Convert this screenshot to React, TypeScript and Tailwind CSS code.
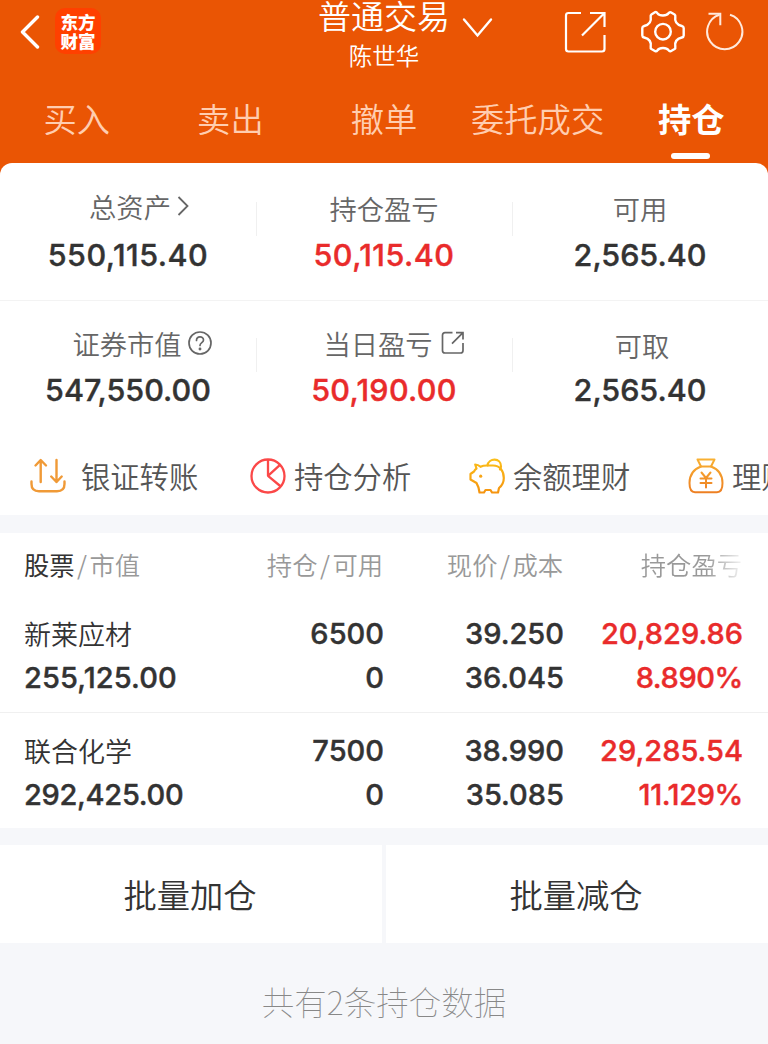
import type { ReactNode } from "react";

const tabs = ["买入", "卖出", "撤单", "委托成交", "持仓"];

const holdings = [
  {
    name: "新莱应材",
    value: "255,125.00",
    held: "6500",
    available: "0",
    price: "39.250",
    cost: "36.045",
    profit: "20,829.86",
    rate: "8.890%",
  },
  {
    name: "联合化学",
    value: "292,425.00",
    held: "7500",
    available: "0",
    price: "38.990",
    cost: "35.085",
    profit: "29,285.54",
    rate: "11.129%",
  },
];

function BackIcon() {
  return (
    <svg className="h-9 w-6" viewBox="0 0 24 36" fill="none" stroke="#fff" strokeWidth="3.4" strokeLinecap="round" strokeLinejoin="round">
      <path d="M20.500 4 5.500 19 20.500 34" />
    </svg>
  );
}

function ShareIcon() {
  return (
    <svg className="h-11 w-11" viewBox="0 0 44 44" fill="none" stroke="#fff" strokeWidth="2.2">
      <path d="M18 3H5.500Q3 3 3 5.500V39Q3 41.500 5.500 41.500H39Q41.500 41.500 41.500 39V25" />
      <path d="M27 3H41.500V17M41.500 3 19 25.500" />
    </svg>
  );
}

function GearIcon() {
  return (
    <svg className="h-11 w-11" viewBox="0 0 44 44" fill="none" stroke="#fff" strokeWidth="2.400" strokeLinejoin="round">
      <path d="M14.300 2.100Q15.500 1.800 16.500 3.300C18.500 6.200 25.500 6.200 27.500 3.300Q28.500 1.800 29.700 2.300L33.600 4.500Q34.600 5.200 34.300 6.800C33.500 11.500 36 14.800 40.800 16Q42.700 16.500 42.700 18V25.500Q42.700 27 40.800 27.500C36 28.700 33.500 32 34.300 36.700Q34.600 38.300 33.600 39L29.700 41.200Q28.500 41.700 27.500 40.200C25.500 37.300 18.500 37.300 16.500 40.200Q15.500 41.700 14.300 41.200L10.400 39Q9.400 38.300 9.700 36.700C10.500 32 8 28.700 3.200 27.500Q1.300 27 1.300 25.500V18Q1.300 16.500 3.200 16C8 14.800 10.500 11.500 9.700 6.800Q9.400 5.200 10.400 4.500Z" />
      <circle cx="22" cy="21.700" r="7.800" />
    </svg>
  );
}

function RefreshIcon() {
  return (
    <svg className="h-10 w-10" viewBox="0 0 40 40" fill="none" stroke="#ffe9dc" strokeWidth="2">
      <path d="M25 2.800A17.600 17.600 0 1 1 14.500 2.800" />
      <path d="M3.500 1.700H15.300V13.200" />
    </svg>
  );
}

function TransferIcon() {
  return (
    <svg className="h-9 w-9" viewBox="0 0 36 36" fill="none" stroke="#f09a37" strokeWidth="2.400" strokeLinecap="round" strokeLinejoin="round">
      <path d="M10.700 24V2.500M5.500 7.500 10.700 2 16 7.500" />
      <path d="M26.500 2V24M21.200 18.500 26.500 24 31.700 18.500" />
      <path d="M1.500 23.500V26Q1.500 33.200 9 33.200H27Q34.500 33.200 34.500 26V23.500" />
    </svg>
  );
}

function PieIcon() {
  return (
    <svg className="h-9 w-9" viewBox="0 0 36 36" fill="none" stroke="#fb4848" strokeWidth="2.300" strokeLinejoin="round">
      <circle cx="18" cy="18" r="16.500" />
      <path d="M18 1.500V17.800L30 6.800M18 17.800 30.800 28.500" />
    </svg>
  );
}

function PiggyIcon() {
  return (
    <svg className="h-9 w-9" viewBox="0 0 36 36" fill="none" strokeWidth="2.200" strokeLinejoin="round" strokeLinecap="round">
      <defs>
        <linearGradient id="pig" x1="0" y1="0" x2="0" y2="36" gradientUnits="userSpaceOnUse">
          <stop stopColor="#fbc01a" />
          <stop offset="1" stopColor="#f5930f" />
        </linearGradient>
      </defs>
      <g stroke="url(#pig)">
        <path d="M6.200 6.500Q9 6.500 11.500 8.800Q14 7.500 18 7.500H24C31 7.500 34.800 13 34.800 20C34.800 25.500 32.500 28 30 30L29 34.500H23L21.500 32H16.500L15 34.500H10.500L9.500 29.500L7.500 25L1.500 21.500V16L5 13.500Q6 11.500 7.500 10.500Z" />
        <path d="M18.500 7.500C19.500-.5 32.300-.5 32 8.500Q31.800 10.500 31 11.500" />
      </g>
      <circle cx="11.700" cy="18.200" r="1.600" fill="#f8a516" />
    </svg>
  );
}

function MoneyBagIcon() {
  return (
    <svg className="h-9 w-9" viewBox="0 0 36 36" fill="none" strokeWidth="2" strokeLinejoin="round" strokeLinecap="round">
      <defs>
        <linearGradient id="bag" x1="0" y1="0" x2="0" y2="36" gradientUnits="userSpaceOnUse">
          <stop stopColor="#f9b233" />
          <stop offset="1" stopColor="#ed7d22" />
        </linearGradient>
      </defs>
      <g stroke="url(#bag)">
        <path d="M9.500 1.500H26.500L23 8.500H13Z" />
        <path d="M13 8.500C5 11.500 1.500 18 1.500 25Q1.500 34.200 7 34.200H29Q34.500 34.200 34.500 25C34.500 18 31 11.500 23 8.500" />
        <path d="M13.500 14.500 18 20 22.500 14.500M18 20V29.500M12.500 20.500H23.500M12.500 25H23.500" />
      </g>
    </svg>
  );
}

function HelpIcon() {
  return (
    <svg className="h-6 w-6" viewBox="0 0 24 24" fill="none" stroke="#666" strokeWidth="1.700" strokeLinecap="round">
      <circle cx="12" cy="12" r="11" />
      <path d="M8.500 9.500C8.500 4.700 15.500 4.700 15.500 9C15.500 11.800 12 11.600 12 14.500" />
      <circle cx="12" cy="18" r=".6" fill="#666" />
    </svg>
  );
}

function OpenIcon() {
  return (
    <svg className="h-6 w-6" viewBox="0 0 24 24" fill="none" stroke="#666" strokeWidth="1.700">
      <path d="M11.500 1.700H4Q1.500 1.700 1.500 4.200V19.500Q1.500 22 4 22H19.500Q22 22 22 19.500V12" />
      <path d="M15 1.700H22V8.500M22 1.700 11 12.700" />
    </svg>
  );
}

type StatProps = {
  label: string;
  value: string;
  icon?: ReactNode;
  red?: boolean;
  divider?: boolean;
  labelClass?: string;
  valueClass?: string;
};

function Stat({ label, value, icon, red, divider, labelClass = "", valueClass = "" }: StatProps) {
  return (
    <div className="relative flex w-64 flex-col items-center">
      <div className={`flex h-9 items-center text-[27.300px] font-[350] leading-9 text-[#666] ${labelClass}`}>
        {label}
        {icon}
      </div>
      <div
        className={`font-[Inter] text-[30.500px] font-medium leading-9 [-webkit-text-stroke:0.4px] ${valueClass} ${
          red ? "text-[#e92b2b]" : "text-[#333]"
        }`}
      >
        {value}
      </div>
      {divider && <span className="absolute -right-px top-3 h-[34px] w-px bg-[#f0f0f0]" />}
    </div>
  );
}

function Action({ icon, label, className }: { icon: ReactNode; label: string; className: string }) {
  return (
    <div className={`flex shrink-0 items-center ${className}`}>
      {icon}
      <span className="-mt-0.5 whitespace-nowrap text-[29.300px] font-[350] leading-9 text-[#555]">{label}</span>
    </div>
  );
}

function Slash() {
  return <span className="mx-[2.500px]">/</span>;
}

export default function App() {
  return (
    <div className="flex h-[1044px] w-[768px] flex-col overflow-hidden bg-[#f6f7fa] font-['Noto_Sans_CJK_SC',sans-serif]">
      <header className="flex h-[163px] shrink-0 flex-col bg-[#ea5504] text-white">
        <div className="flex h-[84px] items-start">
          <div className="flex w-[256px] items-center pl-[17px] pt-2">
            <BackIcon />
            <div className="ml-[14px] flex h-[46px] w-[46px] flex-col items-center justify-center rounded-[10px] bg-[#ff4000] text-[17.500px] font-black leading-[19px]">
              <span>东方</span>
              <span>财富</span>
            </div>
          </div>
          <div className="flex w-64 flex-col items-center">
            <div className="relative h-9 text-[33px] font-[350] leading-[30px]">
              普通交易
              <svg className="absolute -right-[43px] top-[17px] h-[21px] w-[31px]" viewBox="0 0 31 21" fill="none" stroke="#fff" strokeWidth="2.400" strokeLinecap="round">
                <path d="M2 2.500 15.500 18.500 29 2.500" />
              </svg>
            </div>
            <div className="text-[23.500px] font-[350] leading-[38px]">陈世华</div>
          </div>
          <div className="flex w-64 items-center pl-[51px] pt-[10px]">
            <ShareIcon />
            <span className="ml-[34px]"><GearIcon /></span>
            <span className="ml-[20px]"><RefreshIcon /></span>
          </div>
        </div>
        <nav className="grid grid-cols-5 text-center text-[33.300px] leading-[68px]">
          {tabs.map((tab) => {
            const active = tab === "持仓";
            return (
              <div key={tab} className={active ? "relative font-bold" : "font-[350] text-[#ffcdb0]"}>
                {tab}
                {active && <span className="absolute bottom-[-7px] left-[57px] h-1.5 w-[39px] rounded-full bg-white" />}
              </div>
            );
          })}
        </nav>
      </header>

      <div className="shrink-0 bg-[#ea5504]">
        <section className="h-[352px] rounded-t-[12px] bg-white">
          <div className="flex h-[137px] pt-[27px]">
            <Stat
              label="总资产"
              value="550,115.40"
              divider
              labelClass="relative -top-0.5 left-[11px]"
              valueClass="mt-[11px] tracking-[0.5px]"
              icon={
                <svg className="ml-1.5 h-5 w-3" viewBox="0 0 12 20" fill="none" stroke="#666" strokeWidth="1.800">
                  <path d="M1.500 1 10.500 10 1.500 19" />
                </svg>
              }
            />
            <Stat label="持仓盈亏" value="50,115.40" red divider valueClass="mt-[11px] tracking-[0.5px]" />
            <Stat label="可用" value="2,565.40" valueClass="mt-[11px]" />
          </div>
          <div className="flex h-[136px] border-t border-[#f3f3f3] pt-[25px]">
            <Stat
              label="证券市值"
              value="547,550.00"
              divider
              labelClass="relative -top-px left-[14px]"
              valueClass="mt-2.5"
              icon={<span className="ml-1.5"><HelpIcon /></span>}
            />
            <Stat
              label="当日盈亏"
              value="50,190.00"
              red
              divider
              labelClass="relative -top-px left-[10px]"
              valueClass="mt-2.5 tracking-[0.3px]"
              icon={<span className="ml-2"><OpenIcon /></span>}
            />
            <Stat label="可取" value="2,565.40" labelClass="relative left-0.5 top-px" valueClass="mt-2.5" />
          </div>
          <div className="flex h-[79px] items-center overflow-hidden pl-[30px]">
            <Action className="w-[220px] gap-[15px]" icon={<TransferIcon />} label="银证转账" />
            <Action className="w-[219px] gap-2" icon={<PieIcon />} label="持仓分析" />
            <Action className="w-[219px] gap-2" icon={<PiggyIcon />} label="余额理财" />
            <Action className="gap-2" icon={<MoneyBagIcon />} label="理财" />
          </div>
        </section>
      </div>

      <section className="mt-[18px] h-[295px] shrink-0 bg-white">
        <div className="flex h-[62px] pl-6 pr-[26px] text-[25.300px] font-[350] leading-[62px] text-[#999]">
          <div className="w-[178px]">
            <span className="font-normal text-[#333]">股票</span>
            <Slash />
            市值
          </div>
          <div className="w-[181px] text-right">
            持仓
            <Slash />
            可用
          </div>
          <div className="w-[180px] text-right">
            现价
            <Slash />
            成本
          </div>
          <div className="w-[179px] whitespace-nowrap bg-linear-to-r from-[#999] from-80% to-[#f3f3f3] bg-clip-text text-right text-transparent">
            持仓盈亏
          </div>
        </div>
        {holdings.map((h, i) => (
          <div
            key={h.name}
            className={`flex pl-6 pr-[25px] font-[Inter] text-[29px] font-medium leading-[43px] text-[#333] ${
              i > 0 ? "h-[116px] border-t border-[#f0f0f0] pt-4" : "h-[117px] pt-[17px]"
            }`}
          >
            <div className="w-[178px] [-webkit-text-stroke:0.4px]">
              <div className="h-[43px] font-['Noto_Sans_CJK_SC'] text-[27px] font-[350] [-webkit-text-stroke:0]">{h.name}</div>
              <div className={i === 0 ? "pt-px tracking-[0.1px]" : "pt-px tracking-[-0.3px]"}>{h.value}</div>
            </div>
            <div className="w-[182px] text-right [-webkit-text-stroke:0.4px]">
              <div>{h.held}</div>
              <div className="pt-px">{h.available}</div>
            </div>
            <div className="w-[180px] text-right [-webkit-text-stroke:0.4px]">
              <div>{h.price}</div>
              <div className="pt-px">{h.cost}</div>
            </div>
            <div className="w-[179px] text-right text-[#e92b2b] [-webkit-text-stroke:0.4px]">
              <div>{h.profit}</div>
              <div className="pt-px tracking-[-0.4px]">{h.rate}</div>
            </div>
          </div>
        ))}
      </section>

      <div className="mt-[17px] flex h-[98px] shrink-0 gap-1 text-center text-[33.300px] leading-[98px] text-[#333]">
        <button className="w-[382px] bg-white pr-0.5 font-[350]">批量加仓</button>
        <button className="w-[382px] bg-white pr-0.5 font-[350]">批量减仓</button>
      </div>

      <footer className="text-center text-[32.500px] font-thin leading-[116px] text-[#888]">共有2条持仓数据</footer>
    </div>
  );
}
